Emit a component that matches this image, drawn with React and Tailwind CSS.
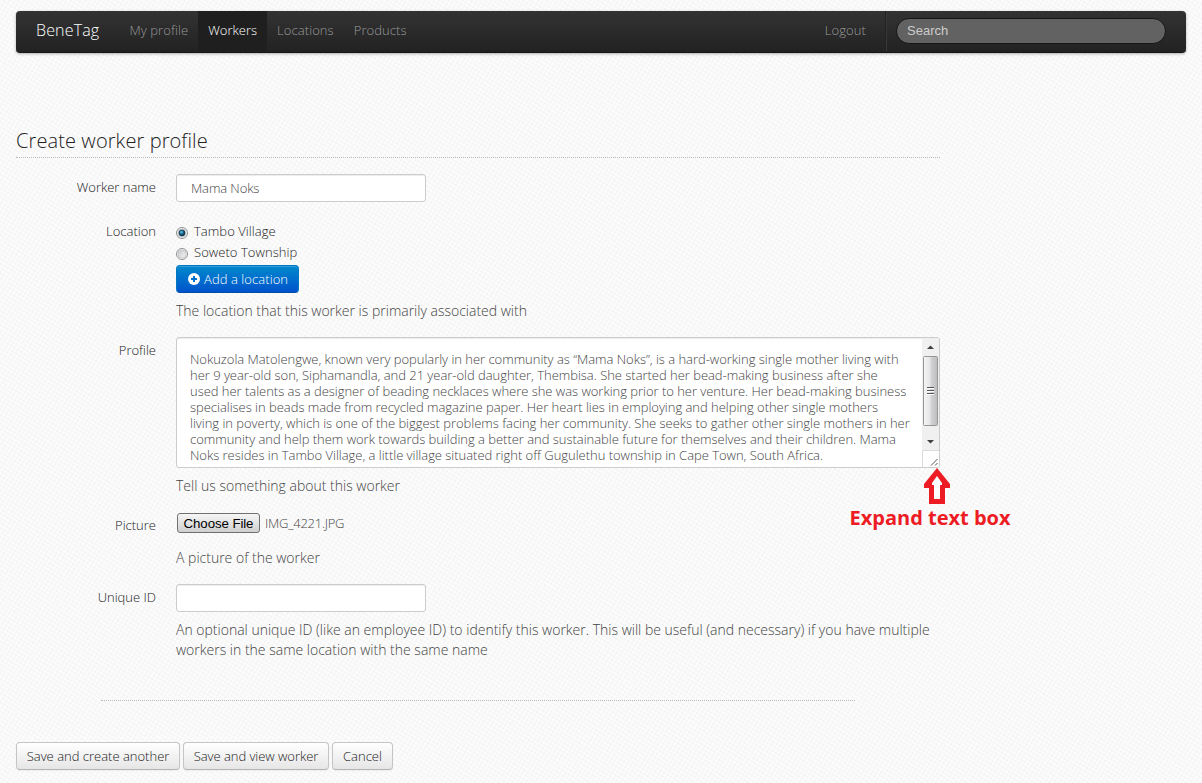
import React from "react";

const PROFILE_LINES = [
  "Nokuzola Matolengwe, known very popularly in her community as “Mama Noks”, is a hard-working single mother living with",
  "her 9 year-old son, Siphamandla, and 21 year-old daughter, Thembisa. She started her bead-making business after she",
  "used her talents as a designer of beading necklaces where she was working prior to her venture. Her bead-making business",
  "specialises in beads made from recycled magazine paper. Her heart lies in employing and helping other single mothers",
  "living in poverty, which is one of the biggest problems facing her community. She seeks to gather other single mothers in her",
  "community and help them work towards building a better and sustainable future for themselves and their children. Mama",
  "Noks resides in Tambo Village, a little village situated right off Gugulethu township in Cape Town, South Africa.",
];

function NavItem({ children, active }) {
  return (
    <a
      className={
        active
          ? "flex h-[41px] items-start bg-[#1f1f1f] px-[10px] pt-[9px] leading-5 text-white"
          : "flex h-[41px] items-start px-[10px] pt-[9px] leading-5 tracking-[0.08px] text-[#999]"
      }
    >
      {children}
    </a>
  );
}

function Navbar() {
  return (
    <nav className="mx-4 flex h-[42px] items-start rounded-[4px] border-b border-[#191516] bg-linear-to-b from-[#333] to-[#222] text-[13px] shadow-[0_1px_3px_rgba(0,0,0,0.3)]">
      <div className="w-[103.5px] pl-5 pt-[9px] text-[16px] leading-5 tracking-[0.15px] text-white">BeneTag</div>
      <NavItem>My profile</NavItem>
      <NavItem active>Workers</NavItem>
      <NavItem>Locations</NavItem>
      <NavItem>Products</NavItem>
      <div className="flex-1" />
      <NavItem>Logout</NavItem>
      <div className="ml-[9px] h-[40px] w-[2px] border-l border-r border-l-[#222] border-r-[#383838]" />
      <div className="mt-[7px] mr-[20px] ml-[9px] flex h-[26px] w-[270px] items-center rounded-full border border-[#151515] bg-[#626262] pl-[10px] font-['Liberation_Sans',sans-serif] text-[13px] font-normal text-[#ccc]">
        Search
      </div>
    </nav>
  );
}

function Label({ children }) {
  return <div className="w-[140px] shrink-0 text-right text-[13px] leading-[18px] text-[#222]">{children}</div>;
}

function Radio({ checked, children }) {
  return (
    <label className="flex h-[21px] items-start gap-[6px] text-[13px] leading-[18px] tracking-[0.05px] text-[#222]">
      <svg width="12" height="12" viewBox="0 0 12 12" className="mt-[5px]">
        <defs>
          <linearGradient id="radioFace" x1="0" y1="0" x2="1" y2="1">
            <stop offset="0" stopColor="#c4c8ca" />
            <stop offset="1" stopColor="#f6f6f6" />
          </linearGradient>
          <radialGradient id="radioDot" cx="0.4" cy="0.35" r="0.6">
            <stop offset="0" stopColor="#6cc8ea" />
            <stop offset="0.5" stopColor="#1b7199" />
            <stop offset="1" stopColor="#0c2d45" />
          </radialGradient>
        </defs>
        <circle cx="6" cy="6" r="5.5" fill="#f4f4f4" stroke="#8e8f8f" />
        <circle cx="6" cy="6" r="4" fill="url(#radioFace)" stroke="#b8bcbe" strokeWidth="0.6" />
        {checked && <circle cx="6" cy="6" r="3" fill="url(#radioDot)" stroke="#12304a" strokeWidth="0.7" />}
      </svg>
      {children}
    </label>
  );
}

function Help({ children }) {
  return <div className="text-[14px] leading-5 text-[#444]">{children}</div>;
}

function Scrollbar() {
  return (
    <div className="flex w-[17px] shrink-0 flex-col">
      <svg width="17" height="112" viewBox="0 0 17 112">
        <defs>
          <linearGradient id="thumb" x1="0" y1="0" x2="1" y2="0">
            <stop offset="0" stopColor="#f5f5f5" />
            <stop offset="0.45" stopColor="#e6e6e8" />
            <stop offset="0.55" stopColor="#d2d2d4" />
            <stop offset="1" stopColor="#bcbcbf" />
          </linearGradient>
        </defs>
        <rect width="17" height="112" fill="#f0f0f0" />
        <path d="M5 11 L8.5 7.5 L12 11 Z" fill="#404040" />
        <rect x="1.5" y="18.5" width="14" height="69" rx="1" fill="url(#thumb)" stroke="#979797" />
        <path d="M5 49.5h7M5 52.5h7M5 55.5h7" stroke="#555" />
        <path d="M5 50.5h7M5 53.5h7M5 56.5h7" stroke="#fff" />
        <path d="M5 102 L12 102 L8.5 105.5 Z" fill="#404040" />
      </svg>
      <svg width="17" height="17" viewBox="0 0 17 17">
        <rect width="17" height="17" fill="#fff" />
        <path d="M0.5 17V0.5H17" fill="none" stroke="#dcdcdc" />
        <path d="M9 15.5L15.5 9M13 15.5L15.5 13" stroke="#555" />
      </svg>
    </div>
  );
}

function Button({ children, className }) {
  return (
    <button
      className={
        "flex h-[28px] items-center justify-center rounded-[4px] border border-[#c5c5c5] border-b-[#b3b3b3] bg-linear-to-b from-white to-[#e6e6e6] pt-px text-[13px] whitespace-nowrap text-[#222] shadow-[0_1px_2px_rgba(0,0,0,0.05)] " +
        className
      }
    >
      {children}
    </button>
  );
}

export default function App() {
  return (
    <div className="h-[783px] w-[1202px] overflow-hidden bg-[#fcfcfc] bg-[repeating-linear-gradient(32deg,rgba(0,0,0,0.014)_0_1.5px,transparent_1.5px_4px),repeating-linear-gradient(122deg,rgba(0,0,0,0.014)_0_1.5px,transparent_1.5px_4px)] pt-[11px] font-['Open_Sans',sans-serif] font-light">
      <Navbar />

      <main className="ml-4 w-[924px]">
        <h1 className="mt-[74px] h-[31px] border-b border-dotted border-[#bbb] text-[20px] leading-[27px] font-light tracking-[0.1px] text-[#222]">
          Create worker profile
        </h1>

        <div className="mt-[16px] flex h-[28px] gap-5">
          <div className="pt-[4px]"><Label>Worker name</Label></div>
          <div className="flex h-[28px] w-[250px] items-center rounded-[3px] border border-[#ccc] bg-white pt-[2px] pl-[14px] text-[13px] tracking-[-0.1px] text-[#444] shadow-[inset_0_1px_1px_rgba(0,0,0,0.075)]">
            Mama Noks
          </div>
        </div>

        <div className="mt-[20px] flex h-[99px] gap-5">
          <Label>Location</Label>
          <div>
            <Radio checked>Tambo Village</Radio>
            <Radio>Soweto Township</Radio>
            <button className="mt-px flex h-[28px] w-[123px] items-center rounded-[4px] border border-[#0077c0] border-b-[#004aa8] bg-linear-to-b from-[#0088cc] to-[#0052cc] pl-[11px] text-[13px] tracking-[0.07px] whitespace-nowrap text-white shadow-[inset_0_1px_0_rgba(255,255,255,0.2)]">
              <svg width="12" height="12" viewBox="0 0 12 12" className="mr-[4px]">
                <circle cx="6" cy="6" r="6" fill="#fff" />
                <path d="M6 3v6M3 6h6" stroke="#0070cc" strokeWidth="2" />
              </svg>
              <span className="pt-[2px]">Add a location</span>
            </button>
            <div className="mt-[8px]"><Help>The location that this worker is primarily associated with</Help></div>
          </div>
        </div>

        <div className="mt-[16px] flex gap-5">
          <div className="pt-[4px]"><Label>Profile</Label></div>
          <div className="relative w-[764px]">
            <div className="flex h-[131px] overflow-hidden rounded-[3px] border border-[#ccc] bg-white shadow-[inset_0_1px_1px_rgba(0,0,0,0.075)]">
              <div className="w-[745px] shrink-0 pt-[13px] pl-[13px] text-[13px] leading-4 tracking-[-0.028px] whitespace-nowrap text-[#444]">
                {PROFILE_LINES.map((line) => (
                  <div key={line}>{line}</div>
                ))}
              </div>
              <Scrollbar />
            </div>
            <div className="absolute top-[131px] left-[674px] flex w-[160px] flex-col items-center">
              <svg width="26" height="37" viewBox="0 0 26 37" className="ml-[14px]">
                <path d="M13 0L26 16V20H21V36H5V20H0V16Z" fill="#ed1c24" />
                <path d="M13 8L18 15V17H16V31H10V17H8V15Z" fill="#fff" />
              </svg>
              <div className="font-['Open_Sans',sans-serif] text-[20px] leading-[26px] font-bold whitespace-nowrap text-[#ed1c24]">
                Expand text box
              </div>
            </div>
          </div>
        </div>

        <div className="mt-[8px] ml-[160px]"><Help>Tell us something about this worker</Help></div>

        <div className="mt-[17px] flex h-[20px] gap-5">
          <div className="pt-[3px]"><Label>Picture</Label></div>
          <div className="flex items-center text-[13px] text-[#444]">
            <div className="ml-px flex h-[20px] w-[83px] items-center justify-center rounded-[3px] border border-[#707070] bg-linear-to-b from-[#f6f6f6] to-[#cfcfcf] pt-px font-['Liberation_Sans',sans-serif] text-[13.3px] font-normal tracking-[-0.1px] whitespace-nowrap text-black">
              Choose File
            </div>
            <span className="ml-[5px] pt-[2px] tracking-[-0.25px]">IMG_4221.JPG</span>
          </div>
        </div>
        <div className="mt-[15px] ml-[160px]"><Help>A picture of the worker</Help></div>

        <div className="mt-[16px] flex h-[28px] gap-5">
          <div className="pt-[4px]"><Label>Unique ID</Label></div>
          <div className="h-[28px] w-[250px] rounded-[3px] border border-[#ccc] bg-white shadow-[inset_0_1px_1px_rgba(0,0,0,0.075)]" />
        </div>
        <div className="mt-[8px] ml-[160px] whitespace-nowrap">
          <Help>An optional unique ID (like an employee ID) to identify this worker. This will be useful (and necessary) if you have multiple</Help>
          <Help>workers in the same location with the same name</Help>
        </div>

        <div className="mt-[40px] ml-[85px] w-[754px] border-b border-dotted border-[#bbb]" />

        <div className="mt-[41px] flex">
          <Button className="w-[164px]">Save and create another</Button>
          <Button className="ml-[3px] w-[146px] tracking-[-0.05px]">Save and view worker</Button>
          <Button className="ml-[3px] w-[61px]">Cancel</Button>
        </div>
      </main>
    </div>
  );
}
